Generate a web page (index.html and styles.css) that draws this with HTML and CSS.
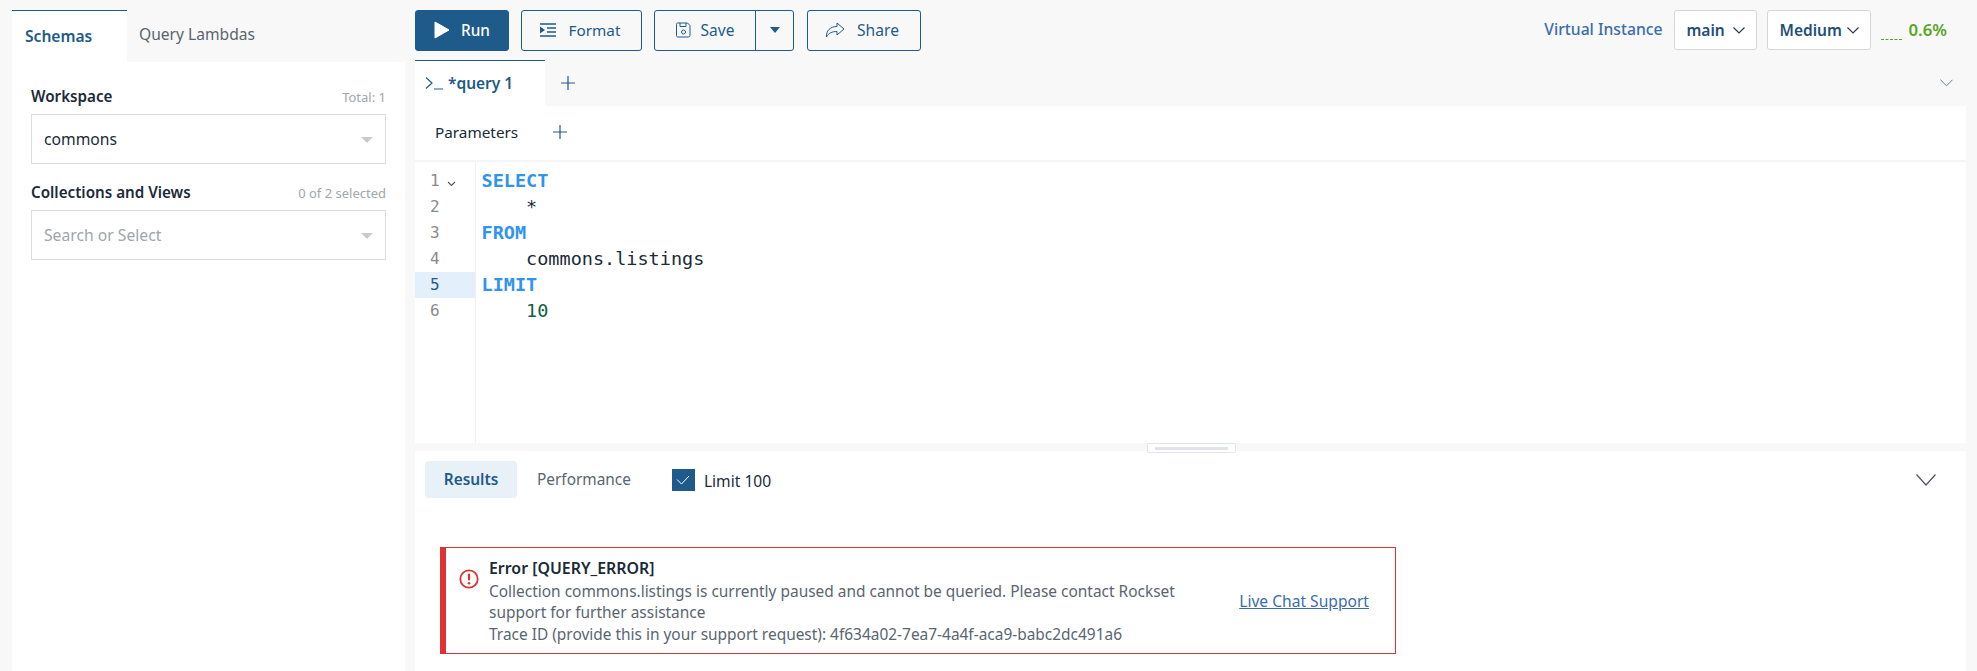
FILE: index.html
```html
<!DOCTYPE html>
<html lang="en">
<head>
<meta charset="utf-8">
<title>Query Editor</title>
<link rel="stylesheet" href="styles.css">
</head>
<body>
<div class="app">
  <aside class="side">
    <div class="side-tabs">
      <div class="side-tab active">Schemas</div>
      <div class="side-tab">Query Lambdas</div>
    </div>
    <div class="side-body">
      <div class="field-head"><span class="field-label">Workspace</span><span class="field-note">Total: 1</span></div>
      <div class="select-box"><span>commons</span><i class="tri"></i></div>
      <div class="field-head second"><span class="field-label">Collections and Views</span><span class="field-note">0 of 2 selected</span></div>
      <div class="select-box placeholder"><span>Search or Select</span><i class="tri"></i></div>
    </div>
  </aside>
  <main class="main">
    <div class="toolbar">
      <button class="btn primary run"><svg width="16" height="18" viewBox="0 0 16 18"><path d="M1 1v16l14-8z" fill="#fff" stroke="#fff" stroke-linejoin="round"/></svg>Run</button>
      <button class="btn format"><svg width="16" height="14" viewBox="0 0 16 14"><path d="M0 1h16M7 5h9M7 9h9M0 13h16" stroke="#1e5b8a" stroke-width="1.5" fill="none"/><path d="M0 3.5v7l5-3.5z" fill="#1e5b8a"/></svg>Format</button>
      <div class="split">
        <button class="split-main"><svg width="15" height="16" viewBox="0 0 15 16"><path d="M1.5 1h10l2.5 2.5v10a1.5 1.5 0 0 1-1.5 1.5h-11A1.5 1.5 0 0 1 .5 13.500v-11A1.500 1.500 0 0 1 1.500 1z" fill="none" stroke="#1e5b8a"/><path d="M4 1v3.500h6V1" fill="none" stroke="#1e5b8a"/><circle cx="7.500" cy="10" r="2" fill="none" stroke="#1e5b8a"/></svg>Save</button>
        <button class="split-caret"><i class="caret"></i></button>
      </div>
      <button class="btn share"><svg width="20" height="16" viewBox="0 0 20 16"><path d="M12 1l7 6-7 6V9.500C7 9.500 3.500 11 1.500 15 1 9 5 4.500 12 4.500z" fill="none" stroke="#1e5b8a" stroke-linejoin="round"/></svg>Share</button>
      <div class="vi">
        <span class="vi-label">Virtual Instance</span>
        <div class="vi-select main-vi">main<svg class="chev" width="12" height="7" viewBox="0 0 12 7"><path d="M.5.5L6 6l5.500-5.500" fill="none" stroke="#2a3a48" stroke-width="1.200"/></svg></div>
        <div class="vi-select med-vi">Medium<svg class="chev" width="12" height="7" viewBox="0 0 12 7"><path d="M.5.5L6 6l5.500-5.500" fill="none" stroke="#2a3a48" stroke-width="1.200"/></svg></div>
        <span class="spark"></span>
        <span class="pct">0.6%</span>
      </div>
    </div>
    <div class="qtabs">
      <div class="qtab"><svg width="19" height="14" viewBox="0 0 19 14"><path d="M1 1.500L7 7l-6 5.500M9 13h9" fill="none" stroke="#1e5b8a" stroke-width="1.200"/></svg><span>*query 1</span></div>
      <svg class="plus tab-plus" width="14" height="14" viewBox="0 0 14 14"><path d="M7 0v14M0 7h14" stroke="#1e5b8a" stroke-width="1.200"/></svg>
      <svg class="qchev" width="13" height="8" viewBox="0 0 14 8"><path d="M.5.500L7 7l6.500-6.500" fill="none" stroke="#6a747c"/></svg>
    </div>
    <div class="params"><span>Parameters</span><svg class="plus" width="14" height="14" viewBox="0 0 14 14"><path d="M7 0v14M0 7h14" stroke="#1e5b8a" stroke-width="1.200"/></svg></div>
    <div class="editor">
      <div class="gutter">
        <div class="ln first">1<svg width="9" height="6" viewBox="0 0 9 6"><path d="M1 1l3.500 3.500L8 1" fill="none" stroke="#555" stroke-width="1.100"/></svg></div>
        <div class="ln">2</div><div class="ln">3</div><div class="ln">4</div>
        <div class="ln current">5</div><div class="ln">6</div>
      </div>
      <div class="code">
        <div class="kw">SELECT</div>
        <div class="ind">*</div>
        <div class="kw">FROM</div>
        <div class="ind">commons.listings</div>
        <div class="kw">LIMIT</div>
        <div class="ind num">10</div>
      </div>
    </div>
    <div class="splitter"><span class="handle"><i></i></span></div>
    <section class="results">
      <div class="res-tabs">
        <div class="res-tab active">Results</div>
        <div class="res-tab">Performance</div>
        <span class="check"><svg width="14" height="10" viewBox="0 0 14 10"><path d="M1 4.500L5.500 9 13 1" fill="none" stroke="#fff"/></svg></span>
        <span class="limit">Limit 100</span>
        <svg class="res-chev" width="20" height="12" viewBox="0 0 20 12"><path d="M.5.500L10 11 19.500.5" fill="none" stroke="#4a5560" stroke-width="1.200"/></svg>
      </div>
      <div class="error">
        <svg class="err-icon" width="20" height="20" viewBox="0 0 20 20"><circle cx="10" cy="10" r="8.700" fill="none" stroke="#dd3333" stroke-width="1.800"/><rect x="8.900" y="4.500" width="2.200" height="7" rx="1" fill="#dd3333"/><circle cx="10" cy="14.300" r="1.300" fill="#dd3333"/></svg>
        <div class="err-text">
          <div class="err-title">Error [QUERY_ERROR]</div>
          <div>Collection commons.listings is currently paused and cannot be queried. Please contact Rockset support for further assistance</div>
          <div class="err-trace">Trace ID (provide this in your support request): 4f634a02-7ea7-4a4f-aca9-babc2dc491a6</div>
        </div>
        <a class="err-link" href="#">Live Chat Support</a>
      </div>
    </section>
  </main>
</div>
</body>
</html>
```

FILE: styles.css
```css
* { box-sizing: border-box; }
html, body { margin: 0; height: 100%; }
body { background: #f8f8f8; font-family: "Noto Sans", sans-serif; color: #1b2a38; overflow: hidden; }
.app { display: flex; height: 671px; padding-left: 12px; gap: 10px; }

.side { width: 393px; padding-top: 10px; display: flex; flex-direction: column; }
.side-tabs { display: flex; height: 52px; }
.side-tab { padding: 0 13px; font-size: 15.600px; line-height: 50px; color: #59656e; white-space: nowrap; }
.side-tab.active { width: 115px; background: #fff; border-top: 1px solid #1e5b8a; color: #1e5b8a; font-weight: 600; }
.side-tab:not(.active) { padding-left: 12px; line-height: 48px; }
.side-body { flex: 1; background: #fff; padding: 20px 19px 0; }
.field-head { display: flex; justify-content: space-between; align-items: baseline; height: 32px; line-height: 28px; }
.field-head.second { margin-top: 14px; }
.field-label { font-size: 15.200px; font-weight: 600; color: #1b2a38; }
.field-note { font-size: 13px; color: #a0a6ab; }
.select-box { height: 50px; border: 1px solid #d8dfe0; display: flex; align-items: center; justify-content: space-between; padding: 0 12px; font-size: 15.700px; color: #1b2a38; }
.select-box.placeholder { color: #a0a6ab; }
.tri { width: 0; height: 0; border-left: 6px solid transparent; border-right: 6px solid transparent; border-top: 6px solid #c8cbcd; margin-top: 2px; }

.main { width: 1551px; display: flex; flex-direction: column; }
.toolbar { height: 60px; padding: 10px 19px 9px 0; display: flex; align-items: stretch; }
.btn { height: 41px; border: 1px solid #1e5b8a; border-radius: 3px; background: transparent; color: #1e5b8a; font: 15.300px "Noto Sans", sans-serif; display: flex; align-items: center; justify-content: center; gap: 11px; padding: 0 0 2px; }
.run { width: 94px; background: #1e5b8a; color: #fff; font-weight: 500; }
.format { width: 121px; margin-left: 12px; gap: 13px; padding-right: 3px; }
.split { display: flex; margin-left: 12px; border: 1px solid #1e5b8a; border-radius: 3px; height: 41px; }
.split button { background: transparent; border: 0; padding: 0 0 2px; color: #1e5b8a; font: 15.500px "Noto Sans", sans-serif; display: flex; align-items: center; justify-content: center; }
.split-main { width: 101px; gap: 10px; border-right: 1px solid #1e5b8a !important; }
.split-caret { width: 37px; }
.caret { width: 0; height: 0; border-left: 5px solid transparent; border-right: 5px solid transparent; border-top: 6px solid #1e5b8a; }
.share { width: 114px; margin-left: 13px; padding-right: 4px; gap: 12px; font-size: 15.600px; }
.vi { margin-left: auto; display: flex; align-items: center; height: 40px; }
.vi-label { font-size: 15.700px; font-weight: 500; color: #3a6cae; margin-right: 12px; white-space: nowrap; margin-top: -2px; }
.vi-select { height: 40px; background: #fff; border: 1px solid #d4d6d8; border-radius: 3px; display: flex; align-items: center; justify-content: space-between; padding: 0 11px; font-size: 15.500px; font-weight: 600; color: #1e4f78; }
.main-vi { width: 83px; }
.med-vi { width: 104px; margin-left: 10px; }
.spark { width: 21px; margin: 18px 6px 0 10px; border-top: 1px dashed #5aa527; }
.pct { font-size: 16.800px; font-weight: 600; color: #5aa527; margin-top: -2px; }

.qtabs { height: 46px; display: flex; align-items: center; }
.qtab { width: 130px; height: 46px; background: #fff; border-top: 1px solid #1e5b8a; display: flex; align-items: center; gap: 4px; padding: 0 0 2px 10px; font-size: 15.500px; font-weight: 600; color: #1e5b8a; }
.tab-plus { margin-left: 16px; }
.qchev { margin-left: auto; margin-right: 13px; }
.params { height: 56px; background: #fff; border-bottom: 2px solid #f5f5f5; display: flex; align-items: center; padding: 0 0 2px 20px; font-size: 15.300px; gap: 35px; }
.editor { height: 281px; background: #fff; display: flex; font-family: "DejaVu Sans Mono", monospace; }
.gutter { width: 61px; border-right: 1px solid #f0f0f0; padding-top: 6px; }
.ln { height: 26px; line-height: 26px; font-size: 16px; color: #8a8a8a; padding-left: 15px; }
.ln.first { display: flex; align-items: center; gap: 7px; }
.ln.first svg { margin-top: 6px; }
.ln.current { background: #e3f0fc; color: #1e5b8a; }
.code { padding: 6px 0 0 5.500px; font-size: 18.500px; line-height: 26px; color: #1b2a38; }
.ind { padding-left: 44.600px; }
.kw { color: #2f93f0; font-weight: 700; }
.num { color: #0f6040; }
.splitter { height: 8px; position: relative; }
.handle { position: absolute; left: 732px; top: 0; width: 89px; height: 10px; background: #fff; border: 1px solid #e4e6e8; border-radius: 2px; display: flex; align-items: center; justify-content: center; }
.handle i { width: 73px; height: 3px; background: #dfe4ea; }

.results { flex: 1; background: #fff; padding: 10px 0 0 10px; }
.res-tabs { display: flex; align-items: center; height: 37px; font-size: 15.400px; }
.res-tab { height: 37px; line-height: 38px; padding: 0 20px 0 19px; color: #59656e; border-radius: 4px; }
.res-tab.active { width: 92px; text-align: center; padding: 0; line-height: 37px; background: #e8f0f8; color: #1e5b8a; font-weight: 600; margin-right: 1px; }
.check { width: 23px; height: 22px; background: #1e5b8a; margin-left: 21px; display: flex; align-items: center; justify-content: center; }
.limit { margin: 2px 0 0 9px; font-size: 15.600px; color: #1b2a38; }
.res-chev { margin-left: auto; margin-right: 30px; }
.error { margin: 49px 0 0 15px; width: 956px; height: 107px; border: 1px solid #d33; border-left: 6px solid #d33; display: flex; align-items: flex-start; }
.err-icon { margin: 21px 0 0 13px; flex: none; }
.err-text { margin: 10px 0 0 10px; width: 730px; font-size: 15.450px; line-height: 20.500px; color: #5a6570; flex: none; }
.err-title { font-weight: 600; font-size: 15.900px; color: #1b2a38; margin-bottom: 2.500px; }
.err-trace { margin-top: 1.500px; }
.err-link { margin: 42px 26px 0 auto; font-size: 15.600px; color: #3a6cae; white-space: nowrap; }
```
